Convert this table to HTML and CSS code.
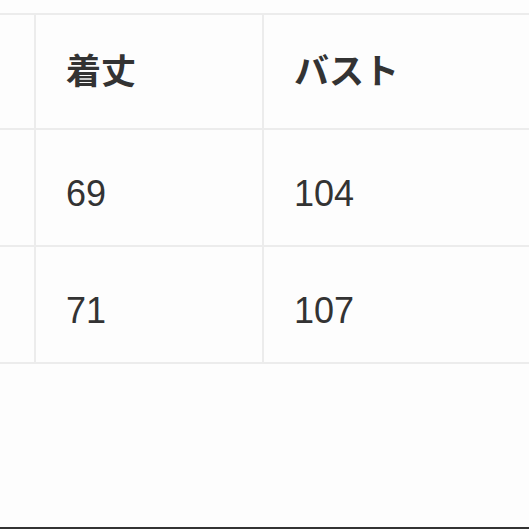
FILE: index.html
```html
<!DOCTYPE html>
<html lang="ja">
<head>
<meta charset="utf-8">
<link rel="stylesheet" href="styles.css">
</head>
<body>
<div class="frame">
  <table class="size-table">
    <tr class="head">
      <th class="c1"></th>
      <th class="c2">着丈</th>
      <th class="c3">バスト</th>
    </tr>
    <tr class="row">
      <td class="c1"></td>
      <td class="c2">69</td>
      <td class="c3">104</td>
    </tr>
    <tr class="row">
      <td class="c1"></td>
      <td class="c2">71</td>
      <td class="c3">107</td>
    </tr>
  </table>
</div>
</body>
</html>
```
FILE: styles.css
```css
html, body {
  margin: 0;
  padding: 0;
  background: #fdfdfd;
}
.frame {
  width: 529px;
  height: 529px;
  box-sizing: border-box;
  overflow: hidden;
  border-bottom: 2px solid #333333;
  padding-top: 13px;
}
.size-table {
  border-collapse: collapse;
  margin-left: -166px;
  table-layout: fixed;
  width: 760px;
}
.size-table th,
.size-table td {
  border: 2px solid #ececec;
  text-align: left;
  vertical-align: middle;
  padding: 0 0 0 30px;
  color: #333333;
}
.head th {
  height: 107px;
  padding-bottom: 6px;
  font-family: "Noto Sans CJK JP", "Liberation Sans", sans-serif;
  font-weight: 700;
  font-size: 35px;
}
.row td {
  height: 103px;
  padding-top: 12px;
  font-family: "Liberation Sans", "Noto Sans CJK JP", sans-serif;
  font-weight: 400;
  font-size: 36px;
}
.c1 { width: 168px; }
.c2 { width: 196px; }
.c3 { width: 300px; }
```
